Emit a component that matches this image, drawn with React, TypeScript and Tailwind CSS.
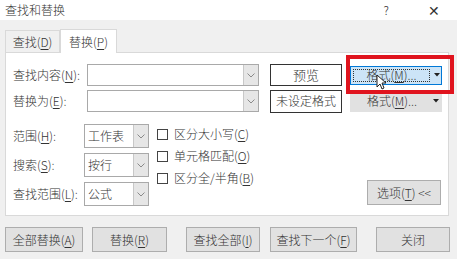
import React from "react";

const font = {
  fontFamily: '"Noto Sans CJK SC", "Liberation Sans", sans-serif',
};

function Key({ k }: { k: string }) {
  return (
    <>
      (<span className="underline underline-offset-[2px]">{k}</span>)
    </>
  );
}

function Chevron() {
  return (
    <svg width="8" height="5" viewBox="0 0 8 5" fill="none">
      <path d="M0.5 0.5 L4 4 L7.5 0.5" stroke="#8a8a8a" strokeWidth="1" />
    </svg>
  );
}

function Tri() {
  return (
    <svg width="6" height="4" viewBox="0 0 6 4">
      <path d="M0 0 L6 0 L3 3.5 Z" fill="#222" />
    </svg>
  );
}

function Combo({ w, h, value }: { w: string; h: string; value?: string }) {
  return (
    <div className={`${w} ${h} flex border border-[#a9a9a9] bg-white`}>
      <div className="flex-1 flex items-center pl-[3px] text-[12px]">
        {value}
      </div>
      <div className="w-[15px] flex items-center justify-center bg-[#e6e6e6] border-l border-[#c8c8c8]">
        <Chevron />
      </div>
    </div>
  );
}

function Check({ label, k }: { label: string; k: string }) {
  return (
    <div className="h-[20px] flex items-center gap-[6px]">
      <div className="w-[11px] h-[11px] border border-[#444] bg-white" />
      <span className="text-[12px]">
        {label}
        <Key k={k} />
      </span>
    </div>
  );
}

function Btn({ w, children }: { w: string; children: React.ReactNode }) {
  return (
    <div
      className={`${w} h-[25px] flex items-center justify-center bg-[#e1e1e1] border border-[#adadad] text-[12px]`}
    >
      {children}
    </div>
  );
}

export default function App() {
  return (
    <div
      style={font}
      className="w-[457px] h-[259px] bg-[#f0f0f0] relative overflow-hidden text-[#333] font-light"
    >
      {/* title bar */}
      <div className="h-[20px] bg-white flex items-center px-[5px] text-[12px]">
        <span>查找和替换</span>
        <span className="ml-auto mr-[39px] text-[12px]">?</span>
        <span className="mr-[12px] text-[14px] leading-none">✕</span>
      </div>

      {/* tabs */}
      <div className="mt-[8px] pl-[5px] flex items-end h-[24px]">
        <div className="w-[55px] h-[22px] flex items-center justify-center border border-b-0 border-[#d9d9d9] bg-[#f0f0f0] text-[12px]">
          查找<Key k="D" />
        </div>
        <div className="w-[57px] h-[24px] -mb-px relative z-10 flex items-center justify-center border border-b-0 border-[#d9d9d9] bg-white text-[12px]">
          替换<Key k="P" />
        </div>
      </div>

      {/* panel */}
      <div className="ml-[5px] w-[444px] h-[164px] bg-white border border-[#d9d9d9] flex flex-col">
        <div className="pt-[11px] pl-[7px]">
          <div className="flex items-center h-[22px]">
            <span className="w-[74px] text-[12px]">
              查找内容<Key k="N" />:
            </span>
            <Combo w="w-[172px]" h="h-[22px]" />
            <div className="ml-[11px] w-[72px] h-[22px] flex items-center justify-center border border-[#333] bg-white text-[13px]">
              预览
            </div>
            <div className="ml-[8px] w-[92px] h-[19px] flex bg-[#cce4f7] border border-[#0078d7]">
              <div className="flex-1 m-[2px] border border-dotted border-[#333] flex items-center justify-center text-[12px]">
                格式<Key k="M" />...
              </div>
              <div className="w-[9px] flex items-center justify-center">
                <Tri />
              </div>
            </div>
          </div>
          <div className="flex items-center h-[22px] mt-[4px]">
            <span className="w-[74px] text-[12px]">
              替换为<Key k="E" />:
            </span>
            <Combo w="w-[172px]" h="h-[22px]" />
            <div className="ml-[11px] w-[72px] h-[23px] flex items-center justify-center border border-[#333] bg-white text-[12px]">
              未设定格式
            </div>
            <div className="ml-[8px] w-[92px] h-[21px] flex bg-[#e1e1e1]">
              <div className="flex-1 flex items-center justify-center text-[12px] pl-[4px]">
                格式<Key k="M" />...
              </div>
              <div className="w-[12px] flex items-center justify-center">
                <Tri />
              </div>
            </div>
          </div>
        </div>

        <div className="mt-[12px] pl-[7px] flex">
          <div className="flex flex-col gap-[5px]">
            <div className="flex items-center">
              <span className="w-[71px] text-[12px]">
                范围<Key k="H" />:
              </span>
              <Combo w="w-[65px]" h="h-[24px]" value="工作表" />
            </div>
            <div className="flex items-center">
              <span className="w-[71px] text-[12px]">
                搜索<Key k="S" />:
              </span>
              <Combo w="w-[65px]" h="h-[24px]" value="按行" />
            </div>
            <div className="flex items-center">
              <span className="w-[71px] text-[12px]">
                查找范围<Key k="L" />:
              </span>
              <Combo w="w-[65px]" h="h-[24px]" value="公式" />
            </div>
          </div>
          <div className="ml-[8px] flex flex-col gap-[2px]">
            <Check label="区分大小写" k="C" />
            <Check label="单元格匹配" k="O" />
            <Check label="区分全/半角" k="B" />
          </div>
          <div className="ml-auto mr-[7px] self-end mb-[1px]">
            <Btn w="w-[74px]">
              选项<Key k="T" />&nbsp;&lt;&lt;
            </Btn>
          </div>
        </div>
      </div>

      {/* bottom buttons */}
      <div className="mt-[11px] pl-[5px] flex">
        <Btn w="w-[78px]">
          全部替换<Key k="A" />
        </Btn>
        <div className="ml-[9px]">
          <Btn w="w-[75px]">
            替换<Key k="R" />
          </Btn>
        </div>
        <div className="ml-[19px]">
          <Btn w="w-[74px]">
            查找全部<Key k="I" />
          </Btn>
        </div>
        <div className="ml-[10px]">
          <Btn w="w-[87px]">
            查找下一个<Key k="F" />
          </Btn>
        </div>
        <div className="ml-[19px]">
          <Btn w="w-[74px]">关闭</Btn>
        </div>
      </div>

      {/* red highlight annotation */}
      <div className="absolute left-[346px] top-[55px] w-[108px] h-[39px] border-[4px] border-[#e0141e] pointer-events-none" />

      {/* mouse cursor */}
      <svg
        className="absolute left-[376px] top-[74px]"
        width="11"
        height="16"
        viewBox="0 0 11 16"
      >
        <path
          d="M1 1 L1 13 L4 10 L6 15 L8 14 L6 9 L10 9 Z"
          fill="white"
          stroke="#222"
          strokeWidth="1"
          strokeLinejoin="round"
        />
      </svg>
    </div>
  );
}
